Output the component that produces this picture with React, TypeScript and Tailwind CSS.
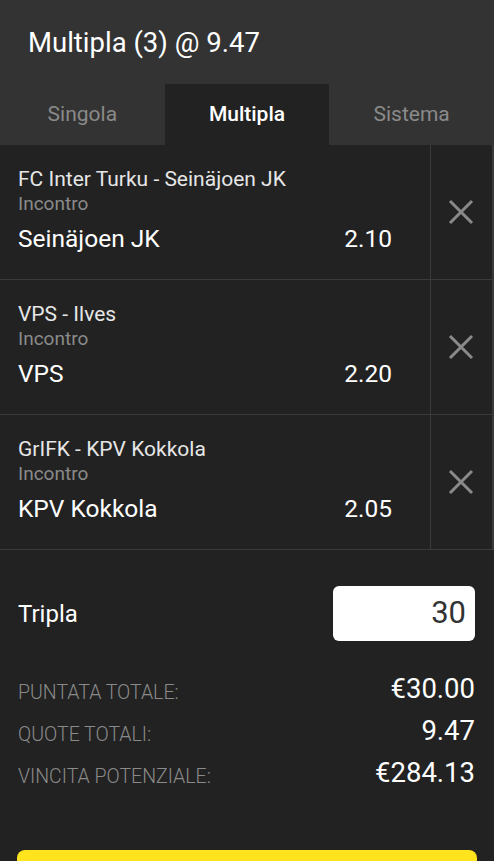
import React from "react";

const bets = [
  { match: "FC Inter Turku - Seinäjoen JK", pick: "Seinäjoen JK", odds: "2.10" },
  { match: "VPS - Ilves", pick: "VPS", odds: "2.20" },
  { match: "GrIFK - KPV Kokkola", pick: "KPV Kokkola", odds: "2.05" },
];

function XIcon() {
  return (
    <svg width="26" height="26" viewBox="0 0 26 26" fill="none">
      <path d="M2 2 L24 24 M24 2 L2 24" stroke="#8a8a8a" strokeWidth="3" strokeLinecap="butt" />
    </svg>
  );
}

export default function App() {
  return (
    <div className="w-[494px] h-[861px] overflow-hidden bg-[#222222] text-white" style={{ fontFamily: "Roboto, 'Noto Sans', sans-serif" }}>
      <div className="bg-[#333333]">
        <div className="h-[84px] flex items-center pl-[28px] pt-[2px] text-[27.5px] text-white">Multipla (3) @ 9.47</div>
        <div className="grid grid-cols-3 h-[61px] text-[21px]">
          <div className="flex items-center justify-center text-[#8a8a8a]">Singola</div>
          <div className="flex items-center justify-center bg-[#222222] text-white font-medium">Multipla</div>
          <div className="flex items-center justify-center text-[#8a8a8a]">Sistema</div>
        </div>
      </div>
      <div className="border-r-2 border-[#3a3a3a]">
        {bets.map((b) => (
          <div key={b.match} className="flex h-[135px] border-b border-[#3a3a3a]">
            <div className="flex-1 flex flex-col pl-[18px] pr-[38px] pt-[21px]">
              <div className="text-[21px] leading-[26px] text-[#e6e6e6]">{b.match}</div>
              <div className="text-[19px] leading-[24px] text-[#8a8a8a]">Incontro</div>
              <div className="flex justify-between items-center mt-[8px] text-[24.5px] leading-[30px] text-white">
                <span>{b.pick}</span>
                <span>{b.odds}</span>
              </div>
            </div>
            <div className="w-[62px] border-l border-[#3a3a3a] flex items-center justify-center pr-[2px]">
              <XIcon />
            </div>
          </div>
        ))}
      </div>
      <div className="flex items-center justify-between pl-[18px] pr-[19px] pt-[36px] pb-[32px]">
        <span className="text-[24px]">Tripla</span>
        <div className="w-[142px] h-[55px] bg-white rounded-[6px] flex items-center justify-end pr-[9px] text-[31px] text-[#333333]">30</div>
      </div>
      <div className="flex flex-col pl-[18px] pr-[19px]">
        {[
          ["PUNTATA TOTALE:", "€30.00"],
          ["QUOTE TOTALI:", "9.47"],
          ["VINCITA POTENZIALE:", "€284.13"],
        ].map(([l, v]) => (
          <div key={l} className="flex justify-between items-start h-[42px]">
            <span className="text-[19.5px] font-light text-[#8a8a8a] leading-[24px] pt-[8px]">{l}</span>
            <span className="text-[27.5px] text-white leading-[32px]">{v}</span>
          </div>
        ))}
      </div>
      <div className="px-[17px] pt-[51px]">
        <div className="h-[56px] bg-[#ffe31c] rounded-[8px]" />
      </div>
    </div>
  );
}
